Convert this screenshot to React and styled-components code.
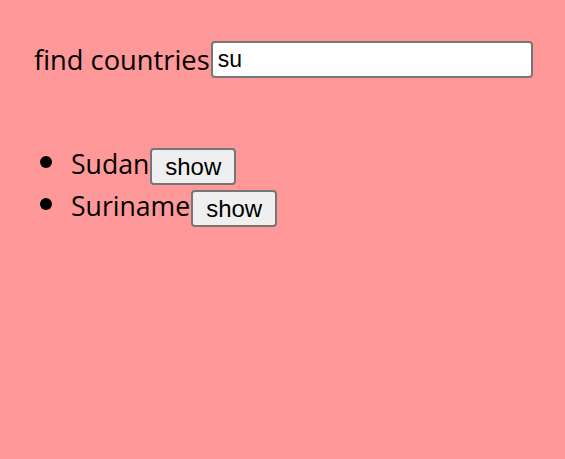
import React, { useState } from "react";
import styled, { createGlobalStyle } from "styled-components";

const countries = ["Sudan", "Suriname"];

export default function App() {
  const [filter, setFilter] = useState("su");

  return (
    <>
      <GlobalStyle />
      <Page>
        <Search>
          <Label>find countries</Label>
          <Input value={filter} onChange={(e) => setFilter(e.target.value)} />
        </Search>
        <List>
          {countries.map((name) => (
            <Item key={name}>
              {name}
              <ShowButton>show</ShowButton>
            </Item>
          ))}
        </List>
      </Page>
    </>
  );
}

const GlobalStyle = createGlobalStyle`
  html, body {
    margin: 0;
    background: #ff9898;
  }
  body {
    font-family: "Open Sans", "Noto Sans", sans-serif;
    color: #000000;
  }
`;

const Page = styled.div`
  padding: 40px 34px 0;
  min-height: 459px;
  box-sizing: border-box;
`;

const Search = styled.div`
  display: flex;
  align-items: center;
  height: 38px;
`;

const Label = styled.span`
  font-size: 27.3px;
  white-space: nowrap;
`;

const Input = styled.input`
  flex-shrink: 0;
  box-sizing: border-box;
  width: 322px;
  height: 37px;
  margin-left: 1px;
  padding: 0 5px;
  border: 2px solid #767676;
  border-radius: 4px;
  background: #ffffff;
  font-family: "Liberation Sans", Arial, sans-serif;
  font-size: 23px;
  color: #000000;
  outline: none;
`;

const List = styled.ul`
  margin: 62px 0 0;
  padding-left: 37px;
  font-size: 26.6px;
`;

const Item = styled.li`
  height: 42px;
  line-height: 42px;

  &::marker {
    font-size: 34px;
  }
`;

const ShowButton = styled.button`
  box-sizing: border-box;
  height: 37px;
  margin-left: 1px;
  padding: 0 13px;
  vertical-align: middle;
  border: 2px solid #767676;
  border-radius: 4px;
  background: #efefef;
  font-family: "Liberation Sans", Arial, sans-serif;
  font-size: 24px;
  color: #000000;
  line-height: 1;
`;
